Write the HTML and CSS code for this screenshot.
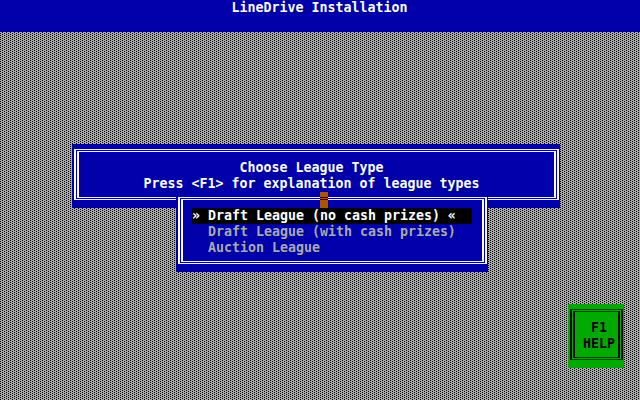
FILE: index.html
```html
<!DOCTYPE html>
<html lang="en">
<head>
<meta charset="utf-8">
<title>LineDrive Installation</title>
<link rel="stylesheet" href="styles.css">
</head>
<body>
<header class="title">LineDrive Installation</header>
<main class="desktop">
  <svg class="dither" width="640" height="368" aria-hidden="true">
    <defs>
      <pattern id="shade" width="4" height="2" patternUnits="userSpaceOnUse"><path d="M2 0h1v1h-1zM0 1h1v1h-1z"/></pattern>
    </defs>
    <rect width="640" height="368" fill="url(#shade)"/>
  </svg>
  <section class="window prompt">
    <svg class="frame" viewBox="0 0 488 64" aria-hidden="true">
      <path fill="#fff" fill-rule="evenodd" d="M2 5H487V56H2zM4 6H485V55H4zM5 7H484V54H5zM7 8H482V53H7z"/>
    </svg>
    <h1>Choose League Type</h1>
    <p>Press &lt;F1&gt; for explanation of league types</p>
  </section>
  <section class="window menu">
    <svg class="frame" viewBox="0 0 312 80" aria-hidden="true">
      <path fill="#fff" fill-rule="evenodd" d="M2 5H311V72H2zM4 6H309V71H4zM5 7H308V70H5zM7 8H306V69H7z"/>
    </svg>
    <ul>
      <li class="selected">» Draft League (no cash prizes) «</li>
      <li>  Draft League (with cash prizes)</li>
      <li>  Auction League</li>
    </ul>
    <span class="cursor"></span>
  </section>
  <aside class="window help">
    <svg class="frame" viewBox="0 0 56 64" aria-hidden="true">
      <path fill="#000" fill-rule="evenodd" d="M2 5H55V56H2zM4 6H53V55H4zM5 7H52V54H5zM7 8H50V53H7z"/>
    </svg>
    <div class="key">F1</div>
    <div>HELP</div>
  </aside>
</main>
</body>
</html>
```

FILE: styles.css
```css
* { box-sizing: border-box; margin: 0; padding: 0; }
body {
  width: 640px;
  height: 400px;
  overflow: hidden;
  background: #aaa;
  color: #fff;
  font: bold 13.29px/16px "DejaVu Sans Mono", monospace;
}
.title { height: 32px; padding-right: 1px; background: #0000aa; text-align: center; }
.desktop { position: relative; height: 368px; background: #aaa; }
.dither { display: block; shape-rendering: crispEdges; }
.window { position: absolute; background: #0000aa; }
.frame { position: absolute; inset: 0; width: 100%; height: 100%; shape-rendering: crispEdges; }
.prompt { left: 72px; top: 112px; width: 488px; height: 64px; padding: 16px 9px 0 0; text-align: center; }
.prompt h1 { font: inherit; }
.menu { left: 176px; top: 160px; width: 312px; height: 80px; padding: 16px; }
.menu ul { position: relative; list-style: none; color: #aaa; }
.menu li { white-space: pre; height: 16px; }
.menu .selected { background: #000; color: #fff; }
.cursor { position: absolute; left: 144px; top: 0; width: 8px; height: 16px; background: linear-gradient(#a50 5px, #000 5px 6px, #a50 6px 7px, #000 7px 8px, #a50 8px); }
.help { left: 568px; top: 272px; width: 56px; height: 64px; padding: 16px 0 0 15px; background: #00aa00; color: #000; }
.key { padding-left: 8px; }
```
